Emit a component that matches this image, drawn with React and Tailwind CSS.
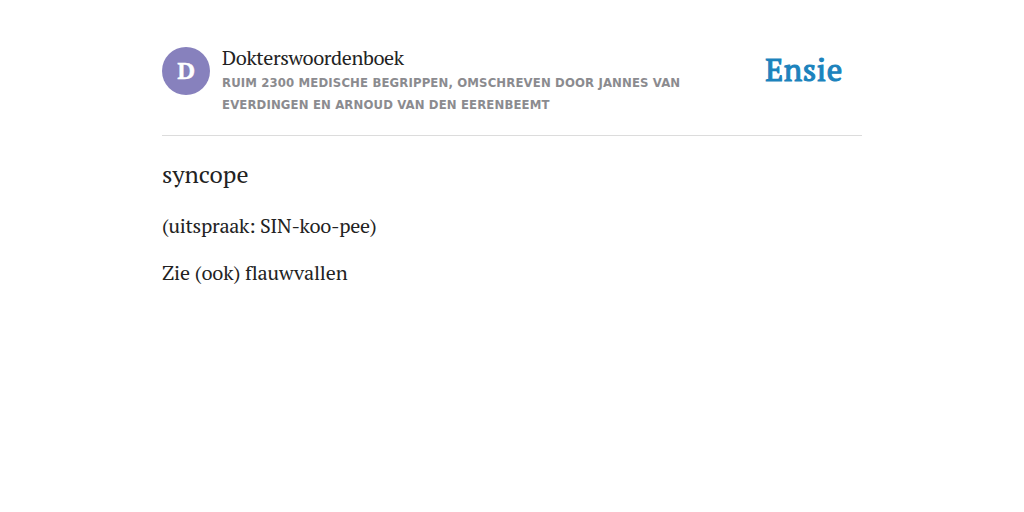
const paragraphs = [
  { text: '(uitspraak: SIN-koo-pee)', tracking: 'tracking-[-0.29px]' },
  { text: 'Zie (ook) flauwvallen', tracking: 'tracking-[-0.12px]' },
];

const Header = () => (
  <header className="flex h-[89px] items-start border-b border-[#dcdcdc]">
    <div className="flex size-12 shrink-0 items-center justify-center rounded-full bg-[#8781bd] pb-0.5 text-2xl font-bold text-white [-webkit-text-stroke:0.4px_white]">
      D
    </div>
    <div className="-mt-px ml-3 w-[480px]">
      <p className="text-xl leading-6 tracking-[-0.4px]">Dokterswoordenboek</p>
      <p className="mt-0.5 font-['DejaVu_Sans_Condensed','DejaVu_Sans',sans-serif] text-[13px] leading-[22px] font-bold tracking-[0.14px] text-[#8b8b8f] uppercase">
        Ruim 2300 medische begrippen, omschreven door Jannes van Everdingen en Arnoud van den Eerenbeemt
      </p>
    </div>
    <div className="ml-auto pt-[5px] pr-[19px] text-[31px] leading-9 tracking-[0.6px] text-[#1c83bd] [-webkit-text-stroke:1.1px_#1c83bd]">
      Ensie
    </div>
  </header>
);

const App = () => {
  return (
    <main className="mx-auto w-[700px] pt-[47px] font-['PT_Serif','Liberation_Serif',serif] text-[#222]">
      <Header />
      <h1 className="mt-[22px] text-2xl leading-8">syncope</h1>
      <div className="mt-[21px]">
        {paragraphs.map(({ text, tracking }) => (
          <p key={text} className={`mb-[17px] text-xl leading-[30px] ${tracking}`}>{text}</p>
        ))}
      </div>
    </main>
  );
};

export default App;
